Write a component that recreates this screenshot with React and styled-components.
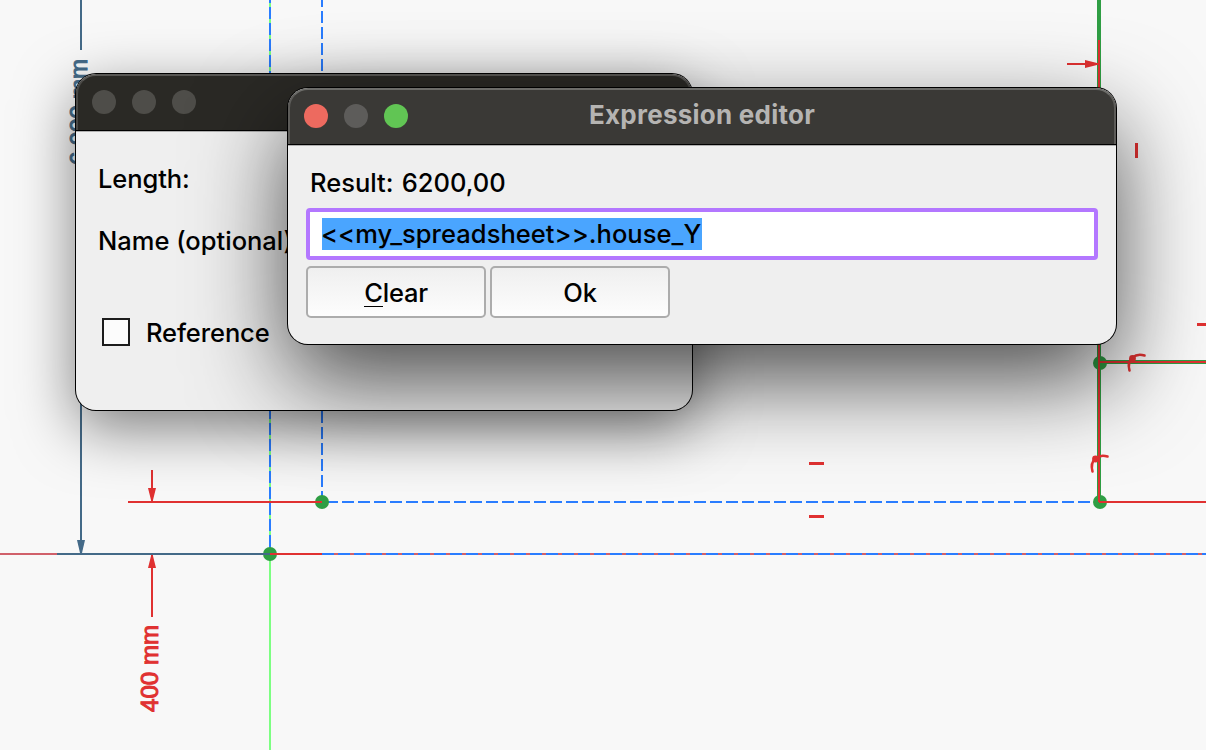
import React from 'react';
import styled, { createGlobalStyle } from 'styled-components';

const GlobalStyle = createGlobalStyle`
  * { box-sizing: border-box; }
  body { margin: 0; overflow: hidden; }
`;

const Desktop = styled.main`
  position: relative;
  width: 1206px;
  height: 750px;
  overflow: hidden;
  background: #f8f8f8;
  font-family: Inter, 'Liberation Sans', sans-serif;
  font-size: 26px;
  color: #000;
`;

const Sketch = styled.svg`
  display: block;
  width: 1206px;
  height: 750px;
`;

const Window = styled.section`
  position: absolute;
  left: ${(p) => p.$x}px;
  top: ${(p) => p.$y}px;
  width: ${(p) => p.$w}px;
  height: ${(p) => p.$h}px;
  display: flex;
  flex-direction: column;
  border-radius: 20px;
  background: #efefef;
  box-shadow: 0 0 0 1px #000, ${(p) => p.$shadow};
`;

const TitleBar = styled.header`
  display: grid;
  grid-template-columns: 120px 1fr 120px;
  align-items: center;
  flex: none;
  height: 56px;
  padding: 0 14px 2px;
  border: 2px solid ${(p) => (p.$active ? '#5d5c59' : '#4a4946')};
  border-top-color: ${(p) => (p.$active ? '#6c6c69' : '#585754')};
  border-bottom: 0;
  border-radius: 20px 20px 0 0;
  background: ${(p) => (p.$active ? '#3a3936' : '#2a2925')};
  box-shadow: 0 1px 0 #000, 0 2px 0 #b0b0b0;
`;

const Lights = styled.div`
  display: flex;
  gap: 16px;
`;

const Light = styled.span`
  width: 24px;
  height: 24px;
  border-radius: 50%;
  background: ${(p) => p.$color};
`;

const Title = styled.h1`
  margin: 0 0 2px;
  text-align: center;
  font-size: 26px;
  line-height: 32px;
  font-weight: 700;
  letter-spacing: 0.25px;
  color: #b5b4b2;
  white-space: nowrap;
`;

const Form = styled.div`
  display: flex;
  flex-direction: column;
  align-items: flex-start;
  padding: 33px 22px;
`;

const Label = styled.label`
  height: 32px;
  line-height: 32px;
  margin-bottom: ${(p) => p.$after || 0}px;
  letter-spacing: ${(p) => p.$track || 0}px;
  font-size: 25.5px;
  font-weight: 450;
  white-space: nowrap;
`;

const CheckRow = styled.div`
  display: flex;
  align-items: center;
  gap: 16px;
  padding-left: 4px;
`;

const CheckBox = styled.span`
  width: 28px;
  height: 28px;
  margin-bottom: 2px;
  border: 2px solid #1c1c1c;
  background: #fcfcfc;
`;

const Editor = styled.div`
  display: flex;
  flex-direction: column;
  padding: 23px 18px;
`;

const Result = styled(Label)`
  padding-left: 4px;
  margin-bottom: 9px;
  word-spacing: 1.5px;
`;

const Field = styled.div`
  display: flex;
  align-items: center;
  height: 52px;
  padding: 0 12px;
  border: 4px solid #b377ff;
  border-radius: 4px;
  background: #fff;
`;

const Selection = styled.span`
  width: 380px;
  height: 32px;
  line-height: 32px;
  font-size: 25.5px;
  font-weight: 450;
  letter-spacing: 0.05px;
  text-indent: -1px;
  background: #4aa5ff;
  white-space: nowrap;
`;

const Buttons = styled.div`
  display: flex;
  gap: 4px;
  margin-top: 6px;
`;

const Button = styled.button`
  width: 180px;
  height: 52px;
  padding: 2px 0 0;
  border: 2px solid #acacac;
  border-radius: 5px;
  background: linear-gradient(#efefef, #fdfdfd);
  font: inherit;
  font-size: 25.5px;
  font-weight: 450;
  line-height: 32px;
  letter-spacing: -0.2px;
  color: #000;
`;

const Mnemonic = styled.span`
  display: inline-block;
  height: 29px;
  line-height: 30px;
  border-bottom: 1px solid #000;
`;

const RED = '#e03131';
const BLUE = '#2a7dff';
const GREEN = '#2f9e44';
const STEEL = '#446a88';

function Drawing() {
  return (
    <Sketch viewBox="0 0 1206 750" fill="none" strokeWidth="2">
      <path d="M0 554H1206" stroke="#d0606a" />
      <path d="M270 0V750" stroke="#7dff82" />
      <g stroke={BLUE} strokeDasharray="12 4">
        <path d="M270 554V0" strokeDashoffset="9" />
        <path d="M322 502V0" strokeDashoffset="1" />
        <path d="M322 502H1100" strokeDashoffset="12" />
        <path d="M322 554H1206" />
      </g>
      <path d="M1099 0V502M1099 362H1206" stroke={GREEN} strokeWidth="4" />
      <g fill={GREEN}>
        <circle cx="322" cy="502" r="7" />
        <circle cx="270" cy="554" r="7" />
        <circle cx="1100" cy="363" r="7" />
        <circle cx="1100" cy="502" r="7" />
      </g>
      <path d="M81 0V50M81 400V553M57 554H270" stroke={STEEL} />
      <path d="M77 540H85L82 553H80Z" fill={STEEL} />
      <g stroke={RED}>
        <path d="M270 554H322M128 502H322M152 470V502M152 555V617M1067 64H1099M1099 40V502M1099 502H1206M1099 362H1206" />
        <path d="M809 463.5H824M809 516.5H824M1136.5 143V158M1197 324.5H1206" strokeWidth="3" />
        <path d="M1092.5 471.5C1091 466 1092.500 461 1095.500 458.500C1099 455.500 1103 455 1107.500 456.500M1129.500 370.500C1128 365 1129.500 360 1132.500 357.500C1136 354.500 1140 354 1144.500 355.500" strokeWidth="2.6" strokeLinecap="round" />
      </g>
      <g fill={RED}>
        <path d="M148 488H156L153 500H151ZM148 568H156L153 556H151ZM1085 60V68L1097 65V63Z" />
        <circle cx="1095.500" cy="459" r="3.4" />
        <circle cx="1132.500" cy="358.500" r="3.4" />
      </g>
      <g fontFamily="Liberation Sans, Arial, sans-serif" fontSize="24" strokeWidth="1">
        <text transform="translate(86.500 165) rotate(-90)" textLength="106" fill={STEEL} stroke={STEEL}>6.000 mm</text>
        <text transform="translate(158 712) rotate(-90)" textLength="87" fill={RED} stroke={RED}>400 mm</text>
      </g>
    </Sketch>
  );
}

export default function App() {
  return (
    <Desktop>
      <GlobalStyle />
      <Drawing />
      <Window $x={76} $y={74} $w={616} $h={336} $shadow="0 18px 60px rgba(0,0,0,.5)">
        <TitleBar>
          <Lights>
            <Light $color="#4e4d49" />
            <Light $color="#4e4d49" />
            <Light $color="#4e4d49" />
          </Lights>
        </TitleBar>
        <Form>
          <Label $after={30} $track={-0.1}>Length:</Label>
          <Label $after={60}>Name (optional)</Label>
          <CheckRow>
            <CheckBox />
            <Label $track={-0.1}>Reference</Label>
          </CheckRow>
        </Form>
      </Window>
      <Window $x={288} $y={88} $w={828} $h={256} $shadow="0 36px 94px rgba(0,0,0,.7)">
        <TitleBar $active>
          <Lights>
            <Light $color="#ed6a5f" />
            <Light $color="#5d5c5a" />
            <Light $color="#61c554" />
          </Lights>
          <Title>Expression editor</Title>
        </TitleBar>
        <Editor>
          <Result as="output">Result: 6200,00</Result>
          <Field>
            <Selection>{'<<my_spreadsheet>>.house_Y'}</Selection>
          </Field>
          <Buttons>
            <Button><Mnemonic>C</Mnemonic>lear</Button>
            <Button>Ok</Button>
          </Buttons>
        </Editor>
      </Window>
    </Desktop>
  );
}
